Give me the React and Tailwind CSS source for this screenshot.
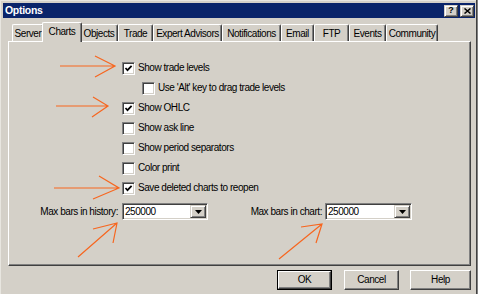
import React from 'react';

const TABS = [
  { label: 'Server', cls: 'w-[32px]' },
  { label: 'Charts', cls: 'w-[40px]', active: true },
  { label: 'Objects', cls: 'w-[38px]' },
  { label: 'Trade', cls: 'w-[35px]' },
  { label: 'Expert Advisors', cls: 'w-[69px]' },
  { label: 'Notifications', cls: 'w-[59px]' },
  { label: 'Email', cls: 'w-[33px]' },
  { label: 'FTP', cls: 'w-[35px]' },
  { label: 'Events', cls: 'w-[37px]' },
  { label: 'Community', cls: 'w-[52px]' },
];

const OPTIONS = [
  { label: 'Show trade levels', checked: true },
  { label: "Use 'Alt' key to drag trade levels", indent: true },
  { label: 'Show OHLC', checked: true },
  { label: 'Show ask line' },
  { label: 'Show period separators' },
  { label: 'Color print' },
  { label: 'Save deleted charts to reopen', checked: true },
];

// classic 3d edges
const SUNKEN =
  'border border-t-[#808080] border-l-[#808080] border-b-white border-r-white shadow-[inset_1px_1px_0_#404040,inset_-1px_-1px_0_#d4d0c8]';
const RAISED =
  'border border-t-[#d4d0c8] border-l-[#d4d0c8] border-b-[#404040] border-r-[#404040] shadow-[inset_1px_1px_0_#fff,inset_-1px_-1px_0_#808080]';

const Checkbox = ({ checked }) => (
  <div className={`w-[13px] h-[13px] bg-white flex items-center justify-center ${SUNKEN}`}>
    {checked && (
      <svg width="9" height="9" viewBox="0 0 9 9">
        <path d="M1.5 4 L3.5 6.2 L7.6 1.8" fill="none" stroke="#000" strokeWidth="1.7" />
      </svg>
    )}
  </div>
);

const Combo = ({ value, cls }) => (
  <div className={`${cls} h-[17px] p-[1px] flex bg-white ${SUNKEN}`}>
    <span className="flex-1 flex items-center pl-[1px] leading-none">{value}</span>
    <div className={`w-[16px] h-full bg-[#d4d0c8] flex items-center justify-center ${RAISED}`}>
      <svg width="7" height="4" viewBox="0 0 7 4">
        <path d="M0 0 H7 L3.5 4 Z" fill="#000" />
      </svg>
    </div>
  </div>
);

const Button = ({ children, cls, isDefault }) => (
  <div className={`${cls} h-[20px] ${isDefault ? 'border border-black' : ''}`}>
    <div
      className={`w-full h-full flex items-center justify-center leading-none border border-t-white border-l-white border-b-[#404040] border-r-[#404040] shadow-[inset_-1px_-1px_0_#808080]`}
    >
      {children}
    </div>
  </div>
);

const Annotations = () => (
  <svg
    className="absolute inset-0 pointer-events-none"
    width="478"
    height="294"
    viewBox="0 0 478 294"
    fill="none"
    stroke="#f7661f"
    strokeWidth="1.2"
  >
    <path d="M60 66 H115 M95 56 L115 66 L95 77" />
    <path d="M56 106 H108 M93 97 L108 106 L92 117" />
    <path d="M54 188 H119 M99 176 L119 188 L93 199" />
    <path d="M78 257 L117 223 M93 229 L117 223 L113 243" />
    <path d="M279 259 L322 224 M301 227 L322 224 L316 243" />
  </svg>
);

export default function App() {
  return (
    <div className="relative w-[478px] h-[294px] overflow-hidden bg-[#d4d0c8] pl-[3px] pt-[3px] text-black font-['Liberation_Sans',Arial,sans-serif] text-[10px] tracking-[-0.45px] shadow-[inset_-1px_0_0_#808080,inset_-2px_0_0_#404040,inset_1px_1px_0_#e8e6e0]">
      {/* title bar */}
      <div className="w-[472px] h-[15px] bg-[#0a246a] flex items-center justify-between pl-[2px] pr-[1px]">
        <span className="text-white font-bold text-[10.5px] tracking-[-0.3px] leading-none">Options</span>
        <div className="flex gap-[2px]">
          <div className={`w-[14px] h-[12px] bg-[#d4d0c8] flex items-center justify-center ${RAISED}`}>
            <span className="font-bold text-[9px] leading-none tracking-normal">?</span>
          </div>
          <div className={`w-[14px] h-[12px] bg-[#d4d0c8] flex items-center justify-center ${RAISED}`}>
            <svg width="7" height="6" viewBox="0 0 7 6">
              <path d="M0.5 0.5 L6.5 5.5 M6.5 0.5 L0.5 5.5" stroke="#000" strokeWidth="1.5" />
            </svg>
          </div>
        </div>
      </div>

      {/* tabs */}
      <div className="ml-[9px] mt-[4px] h-[19px] flex items-end">
        {TABS.map((t) =>
          t.active ? (
            <div
              key={t.label}
              className={`${t.cls} -mx-[2px] -mb-[1px] h-[20px] relative z-10 bg-[#d4d0c8] flex items-center justify-center pb-[2px] border-t border-l border-white border-r border-r-[#404040] shadow-[inset_-1px_0_0_#808080] rounded-t-[2px]`}
            >
              {t.label}
            </div>
          ) : (
            <div
              key={t.label}
              className={`${t.cls} h-[17px] flex items-center justify-center pt-[1px] border-t border-l border-white border-r border-r-[#404040] shadow-[inset_-1px_0_0_#808080] rounded-t-[2px]`}
            >
              {t.label}
            </div>
          )
        )}
      </div>

      {/* panel */}
      <div className="ml-[5px] w-[463px] h-[225px] border-t border-l border-white border-b border-r border-b-[#404040] border-r-[#404040] shadow-[inset_-1px_-1px_0_#808080] pt-[16px]">
        <div className="pl-[113px] flex flex-col">
          {OPTIONS.map((o) => (
            <div key={o.label} className={`h-[20px] flex items-center ${o.indent ? 'pl-[20px]' : ''}`}>
              <Checkbox checked={o.checked} />
              <span className="ml-[3px] leading-none">{o.label}</span>
            </div>
          ))}
        </div>
        <div className="mt-[5px] flex items-center">
          <span className="w-[109px] text-right leading-none">Max bars in history:</span>
          <Combo value="250000" cls="ml-[4px] w-[86px]" />
          <span className="w-[114px] text-right leading-none">Max bars in chart:</span>
          <Combo value="250000" cls="ml-[3px] w-[87px]" />
        </div>
      </div>

      {/* buttons */}
      <div className="w-[468px] mt-[4px] flex justify-end">
        <Button cls="w-[55px]" isDefault>
          OK
        </Button>
        <Button cls="ml-[12px] w-[55px]">Cancel</Button>
        <Button cls="ml-[11px] w-[61px]">Help</Button>
      </div>

      <Annotations />
    </div>
  );
}
